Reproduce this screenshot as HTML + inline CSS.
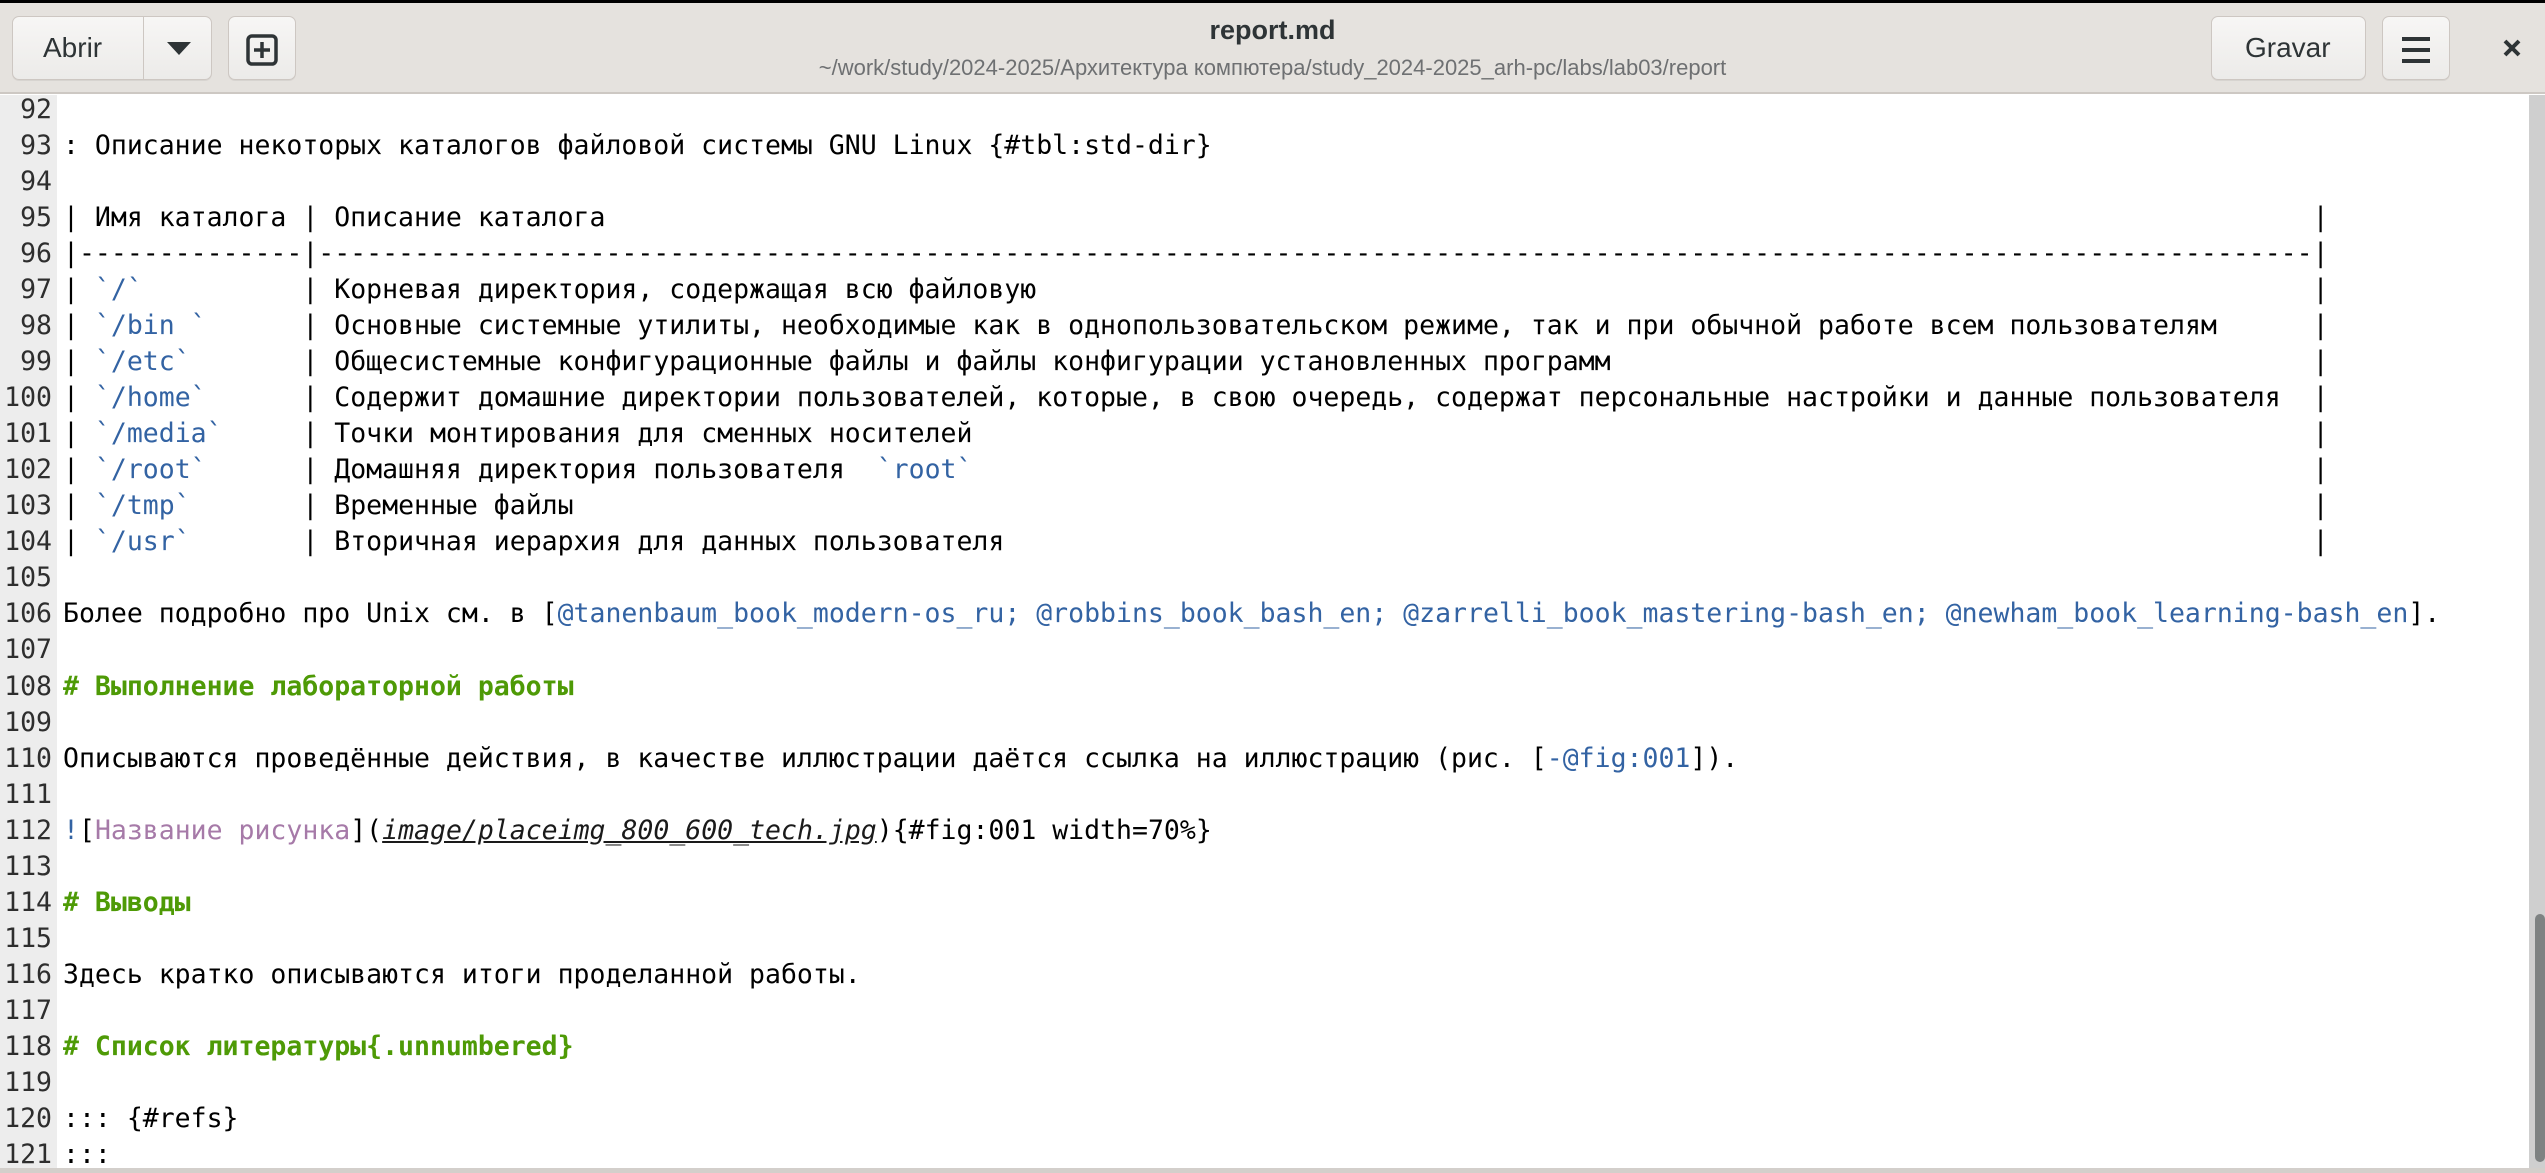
<!DOCTYPE html>
<html><head><meta charset="utf-8">
<style>
*{margin:0;padding:0;box-sizing:border-box}
body{width:2545px;height:1173px;overflow:hidden;background:#fff;position:relative;font-family:"Liberation Sans","DejaVu Sans",sans-serif}
.top{position:absolute;left:0;top:0;width:2545px;height:3px;background:#000}
.hdr{position:absolute;left:0;top:3px;width:2545px;height:91px;background:#e5e2de;border-bottom:2px solid #cdc8c3}
.btn{position:absolute;top:13px;height:64px;border:1px solid #cdc7c2;border-radius:7px;background:linear-gradient(#f7f6f5,#ecebe9);box-shadow:0 1px 0 rgba(0,0,0,.06)}
.btxt{position:absolute;font-size:28px;color:#2e3436;top:16px}
.title{position:absolute;left:0;width:2545px;text-align:center;top:12px;font-size:27px;font-weight:bold;color:#2e3436}
.path{position:absolute;left:0;width:2545px;text-align:center;top:52px;font-size:22px;color:#6e7072}
.gut{position:absolute;left:0;top:95px;width:57px;height:1073px;background:#ededed}
.code{position:absolute;left:0;top:92px;width:2529px;font-family:"DejaVu Sans Mono",monospace;font-size:26.5px;line-height:36.04px;color:#000}
.ln{display:block;position:relative;height:36.04px}
.n{position:absolute;left:0;width:52px;text-align:right;color:#2e2e2e}
.t{position:absolute;left:63px;top:0;white-space:pre}
.rp{position:absolute;left:141ch;top:0}
.b{color:#3363a3}
.g{color:#4e9a06;font-weight:bold}
.p{color:#a67aa8}
.u{font-style:italic;text-decoration:underline;color:#1a1a1a}
.sb{position:absolute;left:2529px;top:95px;width:16px;height:1073px;background:#cfcfcf}
.th{position:absolute;left:2535px;top:914px;width:10px;height:248px;background:#7e8282;border-radius:5px}
.bot{position:absolute;left:0;top:1168px;width:2545px;height:5px;background:#d3cfcb}
</style></head><body>
<div class="top"></div>
<div class="hdr">
  <div class="btn" style="left:12px;width:200px"></div>
  <div style="position:absolute;left:143px;top:14px;width:1px;height:62px;background:#cdc7c2"></div>
  <div class="btxt" style="left:43px;top:29px">Abrir</div>
  <svg style="position:absolute;left:166px;top:38px" width="26" height="15"><path d="M1 1 L25 1 L13 14 Z" fill="#2e3436"/></svg>
  <div class="btn" style="left:228px;width:68px"></div>
  <svg style="position:absolute;left:246px;top:31px" width="32" height="32"><rect x="2" y="2" width="28" height="28" rx="4" fill="none" stroke="#2e3436" stroke-width="3.5"/><path d="M16 8 V24 M8 16 H24" stroke="#2e3436" stroke-width="3.5"/></svg>
  <div class="title">report.md</div>
  <div class="path">~/work/study/2024-2025/Архитектура компютера/study_2024-2025_arh-pc/labs/lab03/report</div>
  <div class="btn" style="left:2211px;width:155px"></div>
  <div class="btxt" style="left:2245px;top:29px">Gravar</div>
  <div class="btn" style="left:2382px;width:68px"></div>
  <svg style="position:absolute;left:2401px;top:33px" width="30" height="28"><path d="M1 3 H29 M1 14 H29 M1 25 H29" stroke="#2e3436" stroke-width="4"/></svg>
  <svg style="position:absolute;left:2502px;top:35px" width="20" height="20"><path d="M3 3 L17 17 M17 3 L3 17" stroke="#2e3436" stroke-width="4"/></svg>
</div>
<div class="gut"></div>
<div class="code"><span class="ln"><span class="n">92</span></span><span class="ln"><span class="n">93</span><span class="t">: Описание некоторых каталогов файловой системы GNU Linux {#tbl:std-dir}</span></span><span class="ln"><span class="n">94</span></span><span class="ln"><span class="n">95</span><span class="t">| Имя каталога | Описание каталога<span class="rp">|</span></span></span><span class="ln"><span class="n">96</span><span class="t">|--------------|-----------------------------------------------------------------------------------------------------------------------------<span class="rp">|</span></span></span><span class="ln"><span class="n">97</span><span class="t">| <span class="b">`/`</span>          | Корневая директория, содержащая всю файловую<span class="rp">|</span></span></span><span class="ln"><span class="n">98</span><span class="t">| <span class="b">`/bin `</span>      | Основные системные утилиты, необходимые как в однопользовательском режиме, так и при обычной работе всем пользователям<span class="rp">|</span></span></span><span class="ln"><span class="n">99</span><span class="t">| <span class="b">`/etc`</span>       | Общесистемные конфигурационные файлы и файлы конфигурации установленных программ<span class="rp">|</span></span></span><span class="ln"><span class="n">100</span><span class="t">| <span class="b">`/home`</span>      | Содержит домашние директории пользователей, которые, в свою очередь, содержат персональные настройки и данные пользователя<span class="rp">|</span></span></span><span class="ln"><span class="n">101</span><span class="t">| <span class="b">`/media`</span>     | Точки монтирования для сменных носителей<span class="rp">|</span></span></span><span class="ln"><span class="n">102</span><span class="t">| <span class="b">`/root`</span>      | Домашняя директория пользователя  <span class="b">`root`</span><span class="rp">|</span></span></span><span class="ln"><span class="n">103</span><span class="t">| <span class="b">`/tmp`</span>       | Временные файлы<span class="rp">|</span></span></span><span class="ln"><span class="n">104</span><span class="t">| <span class="b">`/usr`</span>       | Вторичная иерархия для данных пользователя<span class="rp">|</span></span></span><span class="ln"><span class="n">105</span></span><span class="ln"><span class="n">106</span><span class="t">Более подробно про Unix см. в [<span class="b">@tanenbaum_book_modern-os_ru; @robbins_book_bash_en; @zarrelli_book_mastering-bash_en; @newham_book_learning-bash_en</span>].</span></span><span class="ln"><span class="n">107</span></span><span class="ln"><span class="n">108</span><span class="t g"># Выполнение лабораторной работы</span></span><span class="ln"><span class="n">109</span></span><span class="ln"><span class="n">110</span><span class="t">Описываются проведённые действия, в качестве иллюстрации даётся ссылка на иллюстрацию (рис. [<span class="b">-@fig:001</span>]).</span></span><span class="ln"><span class="n">111</span></span><span class="ln"><span class="n">112</span><span class="t"><span class="b">!</span>[<span class="p">Название рисунка</span>](<span class="u">image/placeimg_800_600_tech.jpg</span>){#fig:001 width=70%}</span></span><span class="ln"><span class="n">113</span></span><span class="ln"><span class="n">114</span><span class="t g"># Выводы</span></span><span class="ln"><span class="n">115</span></span><span class="ln"><span class="n">116</span><span class="t">Здесь кратко описываются итоги проделанной работы.</span></span><span class="ln"><span class="n">117</span></span><span class="ln"><span class="n">118</span><span class="t g"># Список литературы{.unnumbered}</span></span><span class="ln"><span class="n">119</span></span><span class="ln"><span class="n">120</span><span class="t">::: {#refs}</span></span><span class="ln"><span class="n">121</span><span class="t">:::</span></span></div>
<div class="sb"></div>
<div class="th"></div>
<div class="bot"></div>
</body></html>
